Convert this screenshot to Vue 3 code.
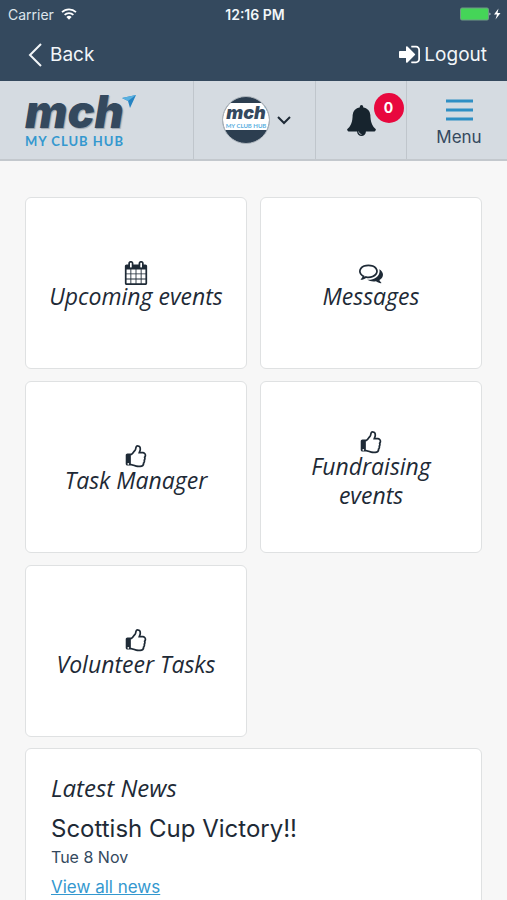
<template>
  <div class="app">
    <header class="top">
      <div class="status">
        <div class="status__carrier">
          <span>Carrier</span>
          <svg class="wifi" viewBox="0 0 16 12" aria-hidden="true">
            <path d="M1 4.2a10 10 0 0 1 14 0" />
            <path d="M3.6 6.9a6.3 6.3 0 0 1 8.8 0" />
            <path class="wifi__dot" d="M5.4 9a3.8 3.8 0 0 1 5.2 0L8 11.8z" />
          </svg>
        </div>
        <span class="status__time">12:16 PM</span>
        <div class="status__power">
          <svg class="battery" viewBox="0 0 42 14" aria-hidden="true">
            <rect x="0.5" y="1" width="28" height="12" rx="1.5" fill="#45d558" stroke="#6f9a86" />
            <path d="M29.5 5.5q2 1.5 0 3z" fill="#dfe8ee" />
            <path d="M38.5 1.5l-4.5 6h3l-1.5 5 5-6.5h-3z" fill="#fff" />
          </svg>
        </div>
      </div>
      <nav class="navbar">
        <button type="button" class="navbar__btn">
          <svg class="chevron" viewBox="0 0 14 24" aria-hidden="true">
            <path d="M13 1L2 12l11 11" />
          </svg>
          Back
        </button>
        <button type="button" class="navbar__btn navbar__btn--out">
          <svg class="signin" viewBox="0 128 1536 1536" aria-hidden="true">
            <path :d="ICONS.signIn" />
          </svg>
          Logout
        </button>
      </nav>
    </header>

    <div class="toolbar">
      <a href="#" class="toolbar__cell toolbar__cell--logo" aria-label="My Club Hub home">
        <span class="logo">
          <span class="logo__name">mch</span>
          <svg class="logo__arrow" viewBox="0 0 14 14" aria-hidden="true">
            <path d="M0 3L14 0 8 13 6 6z" fill="#2583c2" />
            <path d="M0 3L14 0 6 6z" fill="#58b0e0" />
          </svg>
          <span class="logo__sub">MY CLUB HUB</span>
        </span>
      </a>
      <button type="button" class="toolbar__cell toolbar__cell--club" aria-label="Choose club">
        <span class="avatar">
          <span class="avatar__band">
            <span class="avatar__name">mch</span>
            <span class="avatar__sub">MY CLUB HUB</span>
            <svg class="avatar__arrow" viewBox="0 0 14 14" aria-hidden="true">
              <path d="M0 3L14 0 8 13 6 6z" fill="#3498cf" />
            </svg>
          </span>
        </span>
        <svg class="caret" viewBox="0 0 14 9" aria-hidden="true">
          <path d="M1 1l6 6 6-6" />
        </svg>
      </button>
      <button type="button" class="toolbar__cell" aria-label="Notifications">
        <span class="bell">
          <svg class="bell__icon" viewBox="64 0 1664 1792" aria-hidden="true">
            <path :d="ICONS.bell" />
          </svg>
          <span class="bell__count">0</span>
        </span>
      </button>
      <button type="button" class="toolbar__cell toolbar__cell--menu">
        <svg class="burger" viewBox="0 0 27 22" aria-hidden="true">
          <path d="M0 2h27M0 11h27M0 20h27" />
        </svg>
        <span>Menu</span>
      </button>
    </div>

    <main class="content">
      <div class="tiles">
        <a v-for="tile in tiles" :key="tile.label" href="#" class="tile">
          <svg class="tile__icon" :viewBox="tile.box" aria-hidden="true">
            <path :d="ICONS[tile.icon]" />
          </svg>
          <span class="tile__label">{{ tile.label }}</span>
        </a>
      </div>

      <section class="news">
        <h2 class="news__heading">Latest News</h2>
        <h3 class="news__title">Scottish Cup Victory!!</h3>
        <p class="news__date">Tue 8 Nov</p>
        <a href="#" class="news__link">View all news</a>
      </section>
    </main>
  </div>
</template>

<script setup>
const ICONS = {
  signIn:
    'M1184 896q0 26-19 45l-544 544q-19 19-45 19t-45-19-19-45v-288h-448q-26 0-45-19t-19-45v-384q0-26 19-45t45-19h448v-288q0-26 19-45t45-19 45 19l544 544q19 19 19 45zm352-352v704q0 119-84.5 203.5t-203.5 84.5h-320q-13 0-22.5-9.5t-9.5-22.5q0-4-1-20t-.5-26.5 3-23.5 10-19.5 20.5-6.5h320q66 0 113-47t47-113v-704q0-66-47-113t-113-47h-312l-11.5-1-11.5-3-8-5.5-7-9-2-13.5q0-4-1-20t-.5-26.5 3-23.5 10-19.5 20.5-6.5h320q119 0 203.5 84.5t84.5 203.5z',
  bell:
    'M912 1696q0-16-16-16-59 0-101.5-42.5t-42.5-101.5q0-16-16-16t-16 16q0 73 51.5 124.5t124.5 51.5q16 0 16-16zm816-288q0 52-38 90t-90 38h-448q0 106-75 181t-181 75-181-75-75-181h-448q-52 0-90-38t-38-90q50-42 91-88t85-119.5 74.5-158.5 50-206 19.5-260q0-152 117-282.5t307-158.5q-8-19-8-39 0-40 28-68t68-28 68 28 28 68q0 20-8 39 190 28 307 158.5t117 282.5q0 139 19.5 260t50 206 74.5 158.5 85 119.5 91 88z',
  calendar:
    'M192 1664h288v-288h-288v288zm352 0h320v-288h-320v288zm-352-352h288v-320h-288v320zm352 0h320v-320h-320v320zm-352-384h288v-288h-288v288zm736 736h320v-288h-320v288zm-384-736h320v-288h-320v288zm768 736h288v-288h-288v288zm-384-352h320v-320h-320v320zm-352-864v-288q0-13-9.5-22.5t-22.5-9.5h-64q-13 0-22.5 9.5t-9.5 22.5v288q0 13 9.5 22.5t22.5 9.5h64q13 0 22.5-9.5t9.5-22.5zm736 864h288v-320h-288v320zm-384-384h320v-288h-320v288zm384 0h288v-288h-288v288zm32-480v-288q0-13-9.5-22.5t-22.5-9.5h-64q-13 0-22.5 9.5t-9.5 22.5v288q0 13 9.5 22.5t22.5 9.5h64q13 0 22.5-9.5t9.5-22.5zm384-64v1280q0 52-38 90t-90 38h-1408q-52 0-90-38t-38-90v-1280q0-52 38-90t90-38h128v-96q0-66 47-113t113-47h64q66 0 113 47t47 113v96h384v-96q0-66 47-113t113-47h64q66 0 113 47t47 113v96h128q52 0 90 38t38 90z',
  comments:
    'M704 384q-153 0-286 52t-211.5 141-78.5 191q0 82 53 158t149 132l97 56-35 84q34-20 62-39l44-31 53 10q78 14 153 14 153 0 286-52t211.5-141 78.5-191-78.5-191-211.5-141-286-52zm0-128q191 0 353.5 68.5t256.5 186.5 94 257-94 257-256.5 186.5-353.5 68.5q-86 0-176-16-124 88-278 128-36 9-86 16h-3q-11 0-20.5-8t-11.5-21q-1-3-1-6.5t.5-6.5 2-6l2.5-5 3.5-5.5 4-5 4.5-5 4-4.5q5-6 23-25t26-29.5 22.5-29 25-38.5 20.5-44q-124-72-195-177t-71-224q0-139 94-257t256.5-186.5 353.5-68.5zm822 1169q10 24 20.5 44t25 38.5 22.5 29 26 29.5 23 25q1 1 4 4.5t4.5 5 4 5 3.5 5.5l2.5 5 2 6 .5 6.5-1 6.5q-3 14-13 22t-22 7q-50-7-86-16-154-40-278-128-90 16-176 16-271 0-472-132 58 4 88 4 161 0 309-45t264-129q125-92 192-212t67-254q0-77-23-152 129 71 204 178t75 230q0 120-71 224.5t-195 176.5z',
  thumb:
    'M256 1408q0-26-19-45t-45-19-45 19-19 45 19 45 45 19 45-19 19-45zm1152-640q0-51-39-89.5t-89-38.5h-352q0-58 48-159.5t48-160.5q0-98-32-145t-128-47q-26 26-38 85t-30.5 125.5-59.5 109.5q-22 23-77 91-4 5-23 30t-31.5 41-34.5 42.5-40 44-38.5 35.5-40 27-35.5 9h-32v640h32q13 0 31.5 3t33 6.5 38 11 35 11.5 35.5 12.5 29 10.5q211 73 342 73h121q192 0 192-167 0-26-5-56 30-16 47.5-52.5t17.5-73.5-18-69q53-50 53-119 0-25-10-55.5t-25-47.5q32-1 53.5-47t21.5-81zm128-1q0 89-49 163 9 33 9 69 0 77-38 144 3 21 3 43 0 101-60 178 1 139-85 219.5t-227 80.5h-129q-96 0-189.5-22.5t-216.5-65.5q-116-40-138-40h-288q-53 0-90.5-37.5t-37.5-90.5v-640q0-53 37.5-90.5t90.5-37.5h274q36-24 137-155 58-75 107-128 24-25 35.5-85.5t30.5-126.5 62-108q39-37 90-37 84 0 151 32.5t102 101.5 35 186q0 93-48 192h176q104 0 180 76t76 179z',
}

const tiles = [
  { label: 'Upcoming events', icon: 'calendar', box: '64 0 1664 1792' },
  { label: 'Messages', icon: 'comments', box: '0 0 1792 1792' },
  { label: 'Task Manager', icon: 'thumb', box: '0 0 1536 1792' },
  { label: 'Fundraising events', icon: 'thumb', box: '0 0 1536 1792' },
  { label: 'Volunteer Tasks', icon: 'thumb', box: '0 0 1536 1792' },
]
</script>

<style>
body {
  margin: 0;
  background: #f7f7f7;
}
</style>

<style scoped>
.app {
  min-height: 100vh;
  font-family: Inter, 'Liberation Sans', sans-serif;
  color: #1e2a36;
}

.app *,
.app {
  box-sizing: border-box;
}

button {
  margin: 0;
  padding: 0;
  border: 0;
  background: none;
  font-family: inherit;
  color: inherit;
  cursor: pointer;
}

a {
  color: inherit;
  text-decoration: none;
}

.top {
  background: #34495e;
  color: #f2f6f9;
}

.status {
  display: grid;
  grid-template-columns: 1fr auto 1fr;
  align-items: center;
  height: 28px;
  padding: 0 5px 0 8px;
  font-size: 14px;
}

.status__carrier {
  display: flex;
  align-items: center;
  gap: 7px;
  color: #dde5ec;
}

.wifi {
  width: 16px;
  height: 12px;
  fill: none;
  stroke: #fff;
  stroke-width: 1.7;
}

.wifi__dot {
  fill: #fff;
  stroke: none;
}

.status__time {
  font-weight: 600;
}

.status__power {
  display: flex;
  justify-content: flex-end;
}

.battery {
  width: 42px;
  height: 14px;
}

.navbar {
  display: flex;
  justify-content: space-between;
  align-items: center;
  height: 53px;
  padding: 0 20px 0 28px;
}

.navbar__btn {
  display: flex;
  align-items: center;
  gap: 8px;
  font-size: 19px;
  line-height: 24px;
}

.navbar__btn--out {
  gap: 4px;
}

.chevron {
  width: 14px;
  height: 24px;
  fill: none;
  stroke: currentColor;
  stroke-width: 2;
}

.signin {
  width: 21px;
  height: 21px;
  fill: #fff;
}

.toolbar {
  display: grid;
  grid-template-columns: 194fr 122fr 91fr 100fr;
  height: 80px;
  background: #d5dbe1;
  border-bottom: 2px solid #c3c8cd;
}

.toolbar__cell {
  display: flex;
  align-items: center;
  justify-content: center;
  border-right: 1px solid #c0c6cc;
}

.toolbar__cell:last-child {
  border-right: 0;
}

.toolbar__cell--logo {
  justify-content: flex-start;
  padding-left: 25px;
}

.logo {
  position: relative;
  display: flex;
  flex-direction: column;
}

.logo__name {
  font-size: 45px;
  font-style: italic;
  font-weight: 900;
  line-height: 42px;
  color: #34495e;
  text-shadow: 1px 1px 1px #9aa3ab;
}

.logo__arrow {
  position: absolute;
  top: 4px;
  right: -12px;
  width: 14px;
  height: 14px;
}

.logo__sub {
  font-family: Lato, sans-serif;
  font-size: 13px;
  font-weight: 700;
  line-height: 16px;
  letter-spacing: 1px;
  color: #3498cf;
}

.toolbar__cell--club {
  gap: 7px;
  padding-left: 4px;
}

.avatar {
  width: 48px;
  height: 48px;
  padding-top: 6px;
  border: 1px solid #aeb6bd;
  border-radius: 50%;
  background: #2c3e50;
  overflow: hidden;
}

.avatar__band {
  position: relative;
  display: flex;
  flex-direction: column;
  align-items: center;
  padding: 1px 0;
  background: #fff;
}

.avatar__name {
  font-size: 18px;
  font-style: italic;
  font-weight: 900;
  line-height: 18px;
  color: #34495e;
}

.avatar__sub {
  font-family: Lato, sans-serif;
  font-size: 6px;
  font-weight: 700;
  line-height: 7px;
  color: #5aafdf;
}

.avatar__arrow {
  position: absolute;
  top: 3px;
  right: 0;
  width: 5px;
  height: 5px;
}

.caret {
  width: 14px;
  height: 9px;
  fill: none;
  stroke: #1e2a36;
  stroke-width: 2;
}

.bell {
  position: relative;
  display: flex;
}

.bell__icon {
  width: 29px;
  height: 31px;
  fill: #17242e;
}

.bell__count {
  position: absolute;
  top: -12px;
  left: 27px;
  width: 30px;
  border-radius: 50%;
  background: #e8083e;
  color: #fff;
  font-size: 14px;
  font-weight: 700;
  line-height: 30px;
  text-align: center;
}

.toolbar__cell--menu {
  flex-direction: column;
  gap: 4px;
  padding: 8px 0 0 4px;
  font-size: 17px;
  line-height: 24px;
  color: #34495e;
}

.burger {
  width: 27px;
  height: 22px;
  stroke: #2f8fc4;
  stroke-width: 3;
}

.content {
  padding: 36px 25px;
}

.tiles {
  display: grid;
  grid-template-columns: 1fr 1fr;
  gap: 12px 13px;
}

.tile {
  display: flex;
  flex-direction: column;
  align-items: center;
  justify-content: center;
  min-height: 172px;
  padding: 6px 20px 0;
  border: 1px solid #dfe1e2;
  border-radius: 6px;
  background: #fff;
}

.tile__icon {
  width: 24px;
  height: 24px;
  fill: #1e2a36;
}

.tile__label {
  margin-top: -3px;
  font-family: 'Open Sans', sans-serif;
  font-size: 23px;
  font-style: italic;
  line-height: 29px;
  text-align: center;
}

.news {
  display: flex;
  flex-direction: column;
  align-items: flex-start;
  margin-top: 11px;
  padding: 24px 25px;
  border: 1px solid #dfe1e2;
  border-radius: 6px;
  background: #fff;
}

.news__heading {
  margin: 0 0 11px;
  font-family: 'Open Sans', sans-serif;
  font-size: 24px;
  font-style: italic;
  font-weight: 400;
  line-height: 29px;
}

.news__title {
  margin: 0;
  font-size: 24px;
  font-weight: 400;
  line-height: 32px;
}

.news__date {
  margin: 0 0 6px;
  font-size: 16px;
  line-height: 24px;
  color: #34495e;
}

.news__link {
  font-size: 17px;
  line-height: 24px;
  color: #3498cf;
  text-decoration: underline;
}
</style>
